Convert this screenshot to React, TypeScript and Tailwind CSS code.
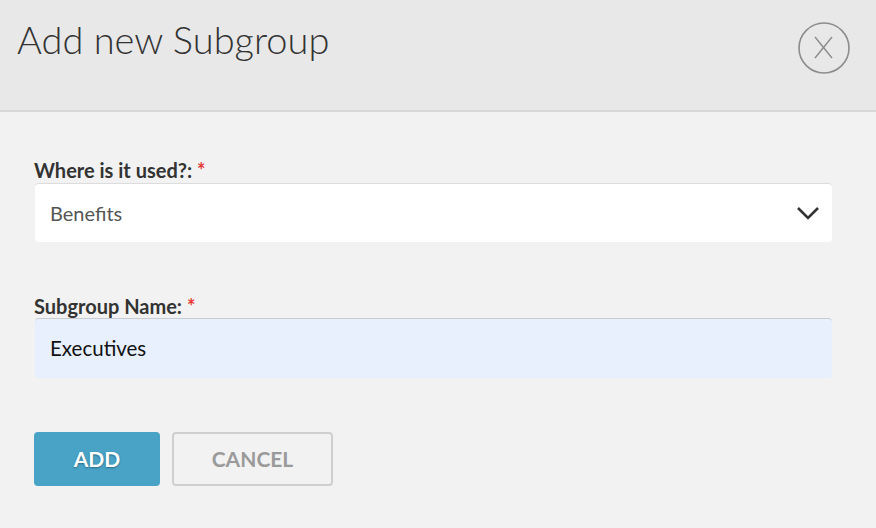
import React from "react";

export default function App() {
  return (
    <div
      className="w-[876px] h-[528px] bg-[#f2f2f2] overflow-hidden"
      style={{ fontFamily: "Lato, 'Open Sans', sans-serif" }}
    >
      <div className="h-[112px] bg-[#e8e8e8] border-b-2 border-[#d8d8d8] relative">
        <h1 className="pl-[17px] pt-[16px] text-[38px] leading-[46px] font-light text-[#333]">
          Add new Subgroup
        </h1>
        <button className="absolute left-[798px] top-[22px] w-[52px] h-[52px]">
          <svg width="52" height="52" viewBox="0 0 52 52">
            <circle cx="26" cy="26" r="25" fill="none" stroke="#8c8c8c" strokeWidth="1.6" />
            <line x1="17" y1="15" x2="34" y2="36" stroke="#8c8c8c" strokeWidth="1.4" />
            <line x1="34" y1="15" x2="17" y2="36" stroke="#8c8c8c" strokeWidth="1.4" />
          </svg>
        </button>
      </div>
      <div className="px-[35px] pt-[46px] w-[832px] box-content">
        <label className="block -ml-px text-[20px] leading-[24px] font-bold text-[#333]">
          Where is it used?: <span className="text-[#e53935]">*</span>
        </label>
        <div className="mt-px h-[59px] w-[797px] bg-white rounded-[4px] border-t border-[#dcdcdc] flex items-center justify-between pl-[15px] pr-[12px]">
          <span className="text-[20px] text-[#555]">Benefits</span>
          <svg width="24" height="16" viewBox="0 0 24 16">
            <polyline points="2,3 12,13 22,3" fill="none" stroke="#333" strokeWidth="2.6" />
          </svg>
        </div>
        <label className="block -ml-px mt-[52px] text-[20px] leading-[24px] font-bold text-[#333]">
          Subgroup Name: <span className="text-[#e53935]">*</span>
        </label>
        <div className="h-[60px] w-[797px] bg-[#e8f0fe] rounded-[4px] border-t border-[#c9ccd4] flex items-center pl-[15px]">
          <span className="text-[20.5px] text-[#111]">Executives</span>
        </div>
        <div className="mt-[54px] flex gap-[12px] -ml-px">
          <button className="w-[126px] h-[54px] rounded-[4px] bg-[#48a3c7] text-white text-[21px] font-bold [text-shadow:0_1px_2px_rgba(0,0,0,0.35)]">
            ADD
          </button>
          <button className="w-[161px] h-[54px] rounded-[4px] border-2 border-[#cfcfcf] text-[#9a9a9a] text-[21px] font-bold">
            CANCEL
          </button>
        </div>
      </div>
    </div>
  );
}
